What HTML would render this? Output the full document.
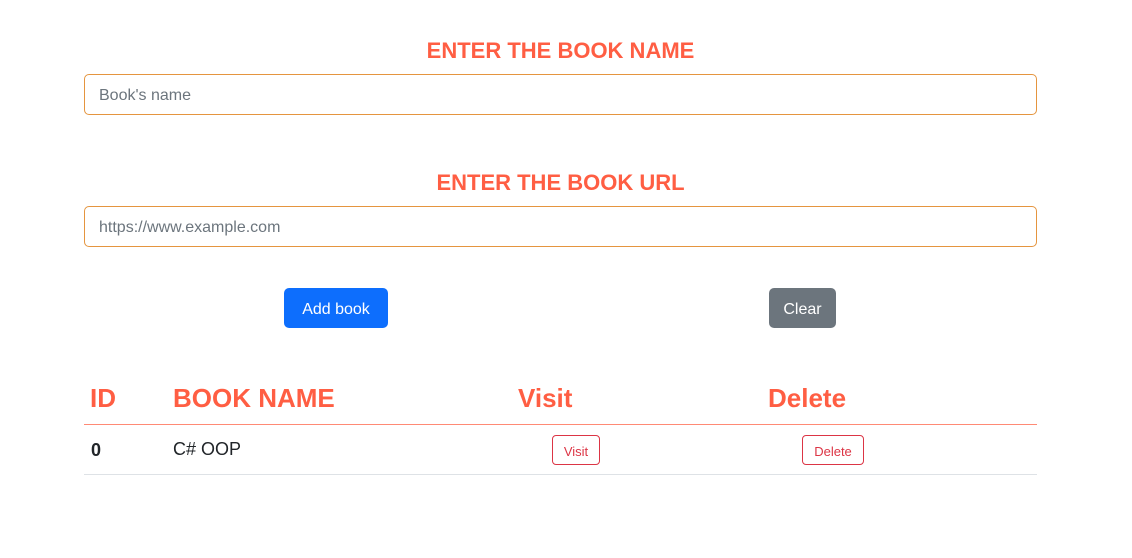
<!DOCTYPE html>
<html><head><style>
body{margin:0;background:#fff;font-family:"Liberation Sans",sans-serif;width:1132px;height:558px;position:relative;overflow:hidden}
.h{position:absolute;left:84px;width:953px;text-align:center;color:#ff5e43;font-weight:bold;font-size:22px}
.in{position:absolute;left:84px;border:1px solid #e5953f;border-radius:5px;color:#6c757d;font-size:16px;line-height:42px;padding-left:14px;box-sizing:border-box;width:953px;height:41px}
.btn{position:absolute;color:#fff;font-size:16px;border-radius:5px;text-align:center;line-height:43px;height:40px}
.th{position:absolute;top:383px;color:#ff5e43;font-weight:bold;font-size:26px}
.ob{position:absolute;top:435px;height:30px;border:1px solid #dc3545;color:#dc3545;border-radius:4px;font-size:13px;line-height:32px;text-align:center;box-sizing:border-box}
</style></head><body>
<div class="h" style="top:38px">ENTER THE BOOK NAME</div>
<div class="in" style="top:74px">Book's name</div>
<div class="h" style="top:170px">ENTER THE BOOK URL</div>
<div class="in" style="top:206px">https://www.example.com</div>
<div class="btn" style="left:284px;top:288px;width:104px;background:#0d6efd">Add book</div>
<div class="btn" style="left:769px;top:288px;width:67px;background:#6c757d">Clear</div>
<div class="th" style="left:90px">ID</div>
<div class="th" style="left:173px">BOOK NAME</div>
<div class="th" style="left:518px">Visit</div>
<div class="th" style="left:768px">Delete</div>
<div style="position:absolute;left:84px;top:424px;width:953px;height:1px;background:#ff8a75"></div>
<div style="position:absolute;left:91px;top:440px;font-weight:bold;font-size:18px;color:#212529">0</div>
<div style="position:absolute;left:173px;top:439px;font-size:18px;color:#212529">C# OOP</div>
<div class="ob" style="left:552px;width:48px">Visit</div>
<div class="ob" style="left:802px;width:62px">Delete</div>
<div style="position:absolute;left:84px;top:474px;width:953px;height:1px;background:#dee2e6"></div>
</body></html>
